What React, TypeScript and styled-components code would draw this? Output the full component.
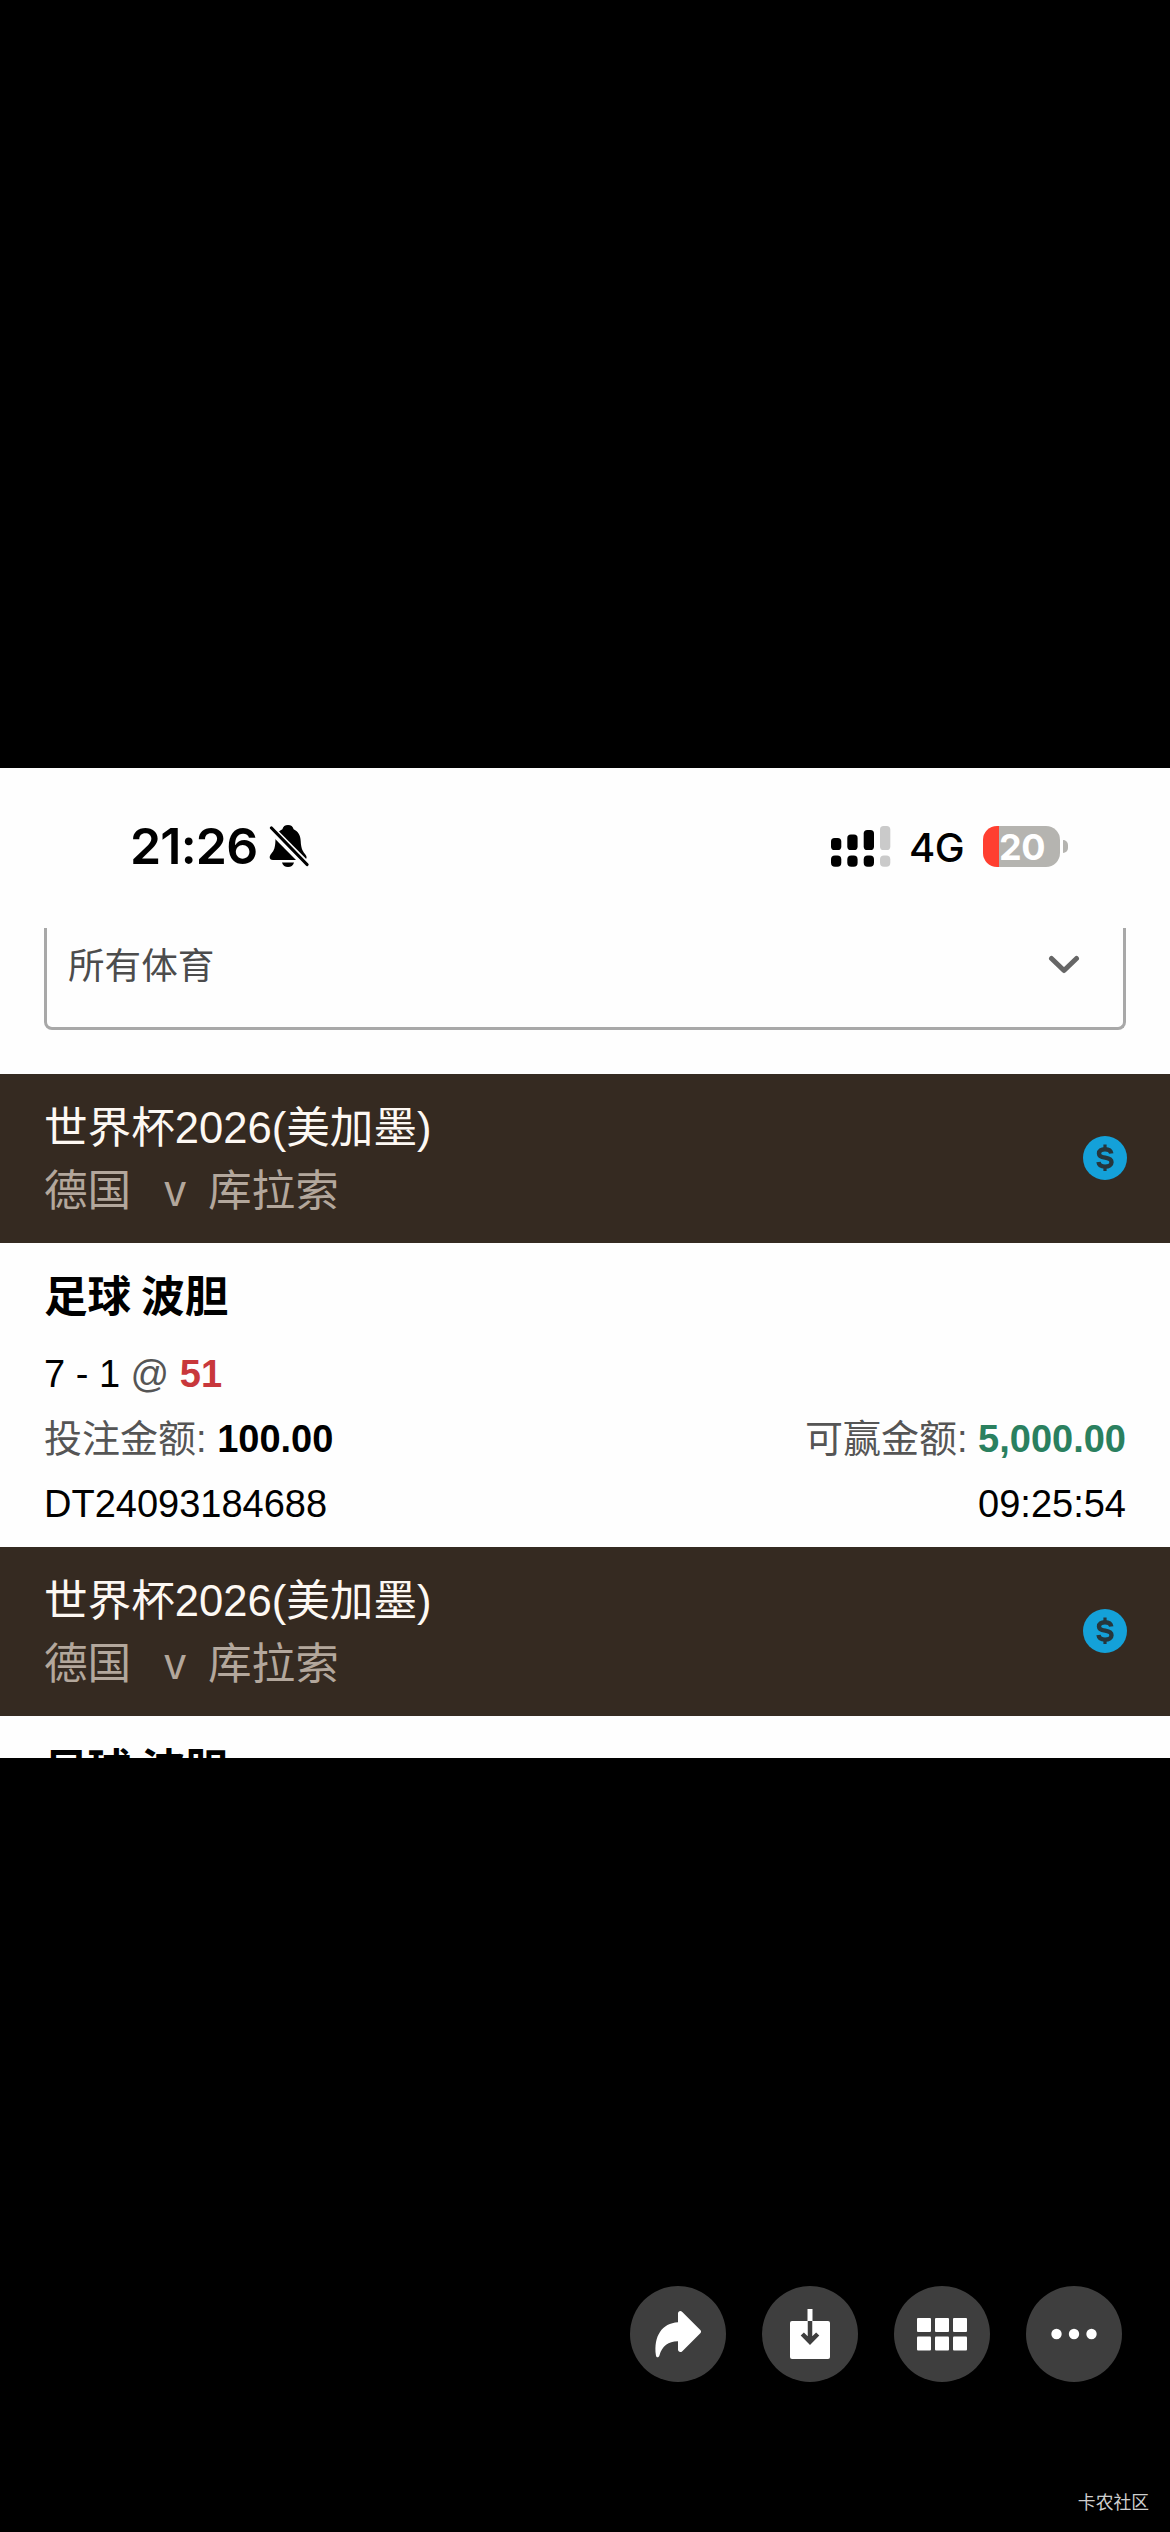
import React from "react";
import styled, { createGlobalStyle } from "styled-components";

const GlobalStyle = createGlobalStyle`
  * { box-sizing: border-box; }
  body { margin: 0; background: #000; }
`;

const Viewer = styled.main`
  display: flex;
  flex-direction: column;
  width: 1170px;
  height: 2532px;
  padding-top: 768px;
  background: #000;
  color: #000;
  font-family: "Liberation Sans", "Noto Sans CJK SC", sans-serif;
`;

const Photo = styled.section`
  flex: none;
  height: 990px;
  overflow: hidden;
  background: #fefefe;
`;

const StatusBar = styled.header`
  display: flex;
  align-items: center;
  height: 160px;
  padding: 0 102px 4px 130px;
  font-family: Inter, sans-serif;
`;

const Clock = styled.span`
  width: 139px;
  font-size: 50px;
  font-weight: 600;
  line-height: 62px;
  letter-spacing: -0.8px;
  white-space: nowrap;
`;

const Indicators = styled.div`
  display: flex;
  align-items: center;
  margin-left: auto;
`;

const Network = styled.span`
  width: 74px;
  margin-left: 18px;
  padding-top: 3px;
  font-size: 40px;
  font-weight: 500;
  line-height: 50px;
  letter-spacing: -0.6px;
`;

const Battery = styled.div`
  display: flex;
  align-items: center;
  gap: 3px;
`;

const BatteryBody = styled.div`
  width: 77px;
  height: 41px;
  border-radius: 14px;
  background: linear-gradient(90deg, #ff3f30 0 16px, #b5b4b0 16px);
  color: #fff;
  font-size: 36px;
  font-weight: 700;
  line-height: 42px;
  letter-spacing: -0.5px;
  padding-left: 16px;
`;

const BatteryCap = styled.div`
  width: 5px;
  height: 13px;
  border-radius: 0 6px 6px 0;
  background: #b5b4b0;
`;

const Select = styled.div`
  display: flex;
  align-items: flex-start;
  justify-content: space-between;
  height: 102px;
  margin: 0 44px 44px;
  padding: 0 43px 0 21px;
  border: solid #a8a8a8;
  border-width: 0 3px 3px;
  border-radius: 0 0 8px 8px;
  color: #4c4c4c;
  font-size: 36.6px;
  line-height: 77px;

  svg { margin-top: 27px; }
`;

const TicketHead = styled.div`
  display: flex;
  align-items: center;
  justify-content: space-between;
  height: 168.5px;
  padding: 0 43px 0 44px;
  background: #352a21;
  font-size: 43.6px;
  line-height: 63px;
`;

const Titles = styled.div`
  display: flex;
  flex-direction: column;
  padding-top: 3px;
`;

const League = styled.div`
  color: #fdf8f3;
`;

const Teams = styled.div`
  display: flex;
  color: #b3a79c;
`;

const Versus = styled.span`
  margin: 0 22px 0 33px;
`;

const TicketBody = styled.div`
  height: 304.5px;
  padding: 18px 44px 0;
  font-size: 38px;
`;

const Market = styled.h2`
  margin: 0 0 17px;
  font-family: "Noto Sans CJK SC", sans-serif;
  font-size: 43.6px;
  font-weight: 700;
  line-height: 64px;
`;

const Row = styled.div`
  display: flex;
  justify-content: space-between;
  height: 65.2px;
  line-height: 65.2px;
  white-space: pre;
`;

const Muted = styled.span`
  color: #555;
`;

const Amount = styled.strong<{ $color?: string }>`
  color: ${(p) => p.$color ?? "#000"};
  font-weight: 700;
`;

const Toolbar = styled.nav`
  display: flex;
  justify-content: flex-end;
  gap: 36px;
  margin-top: 528px;
  padding-right: 48px;
`;

const RoundButton = styled.button`
  width: 96px;
  height: 96px;
  padding: 0;
  border: 0;
  border-radius: 50%;
  background: #3e3e3e;

  svg { display: block; }
`;

const Watermark = styled.div`
  margin-top: 106px;
  padding-right: 21px;
  color: #cfcfcf;
  font-family: "Noto Sans CJK SC", sans-serif;
  font-size: 17.8px;
  line-height: 26px;
  text-align: right;
`;

const MutedBell = () => (
  <svg width="40" height="44" viewBox="0 0 40 44">
    <path d="M19 1c-3 0-5 1.600-5.600 4.200C8.500 7.500 6.600 11.500 6.400 17c-.2 6-1.200 9.500-4 12.500C-.2 32.500 0 36 4 36h30c4 0 4.600-3 2-6-3-3.600-4-7-4.300-13C31.500 11.500 29.400 7.500 24.600 5.200 24 2.600 22 1 19 1z" />
    <path d="M13 38.500h12c-.8 3-3 4.500-6 4.500s-5.200-1.500-6-4.500z" />
    <path d="M1.500 4.500 37.500 41" stroke="#fefefe" strokeWidth="8" />
    <path d="M2.500 4 38 40.500" stroke="#000" strokeWidth="3.200" strokeLinecap="round" />
  </svg>
);

const signalBars = [
  { x: 0, y: 13, color: "#000" },
  { x: 16.3, y: 9.5, color: "#000" },
  { x: 32.7, y: 5, color: "#000" },
  { x: 49, y: 1, color: "#cacaca" },
];

const Signal = () => (
  <svg width="60" height="42" viewBox="0 0 60 42">
    {signalBars.map((b) => (
      <g key={b.x} fill={b.color}>
        <rect x={b.x} y={b.y} width="10.300" height={25 - b.y} rx="3.600" />
        <rect x={b.x} y="30.500" width="10.300" height="11.200" rx="4" />
      </g>
    ))}
  </svg>
);

const Chevron = () => (
  <svg width="32" height="21" viewBox="0 0 32 21">
    <path d="M3.500 3.500 16 15.500 28.500 3.500" fill="none" stroke="#666" strokeWidth="5" strokeLinecap="round" strokeLinejoin="round" />
  </svg>
);

const Coin = () => (
  <svg width="44" height="44" viewBox="0 0 44 44">
    <circle cx="22" cy="22" r="22" fill="#14a1d9" />
    <g fill="none" stroke="#26363c">
      <path d="M28.300 17.500c-.5-3-2.900-4.300-6.300-4.300-3.700 0-6 1.600-6 4.200 0 2.900 2.800 3.700 6.200 4.300 3.500.6 6.300 1.500 6.300 4.500 0 2.800-2.600 4.400-6.400 4.400-3.700 0-6.200-1.500-6.600-4.600" strokeWidth="4.400" />
      <path d="M22 8.500v5M22 30v5" strokeWidth="3.200" />
    </g>
  </svg>
);

const ShareIcon = () => (
  <svg width="96" height="96" viewBox="0 0 96 96" fill="#fff">
    <path d="M48 36.300V27.500c0-2.700 2.700-3.400 4.300-1.600l18 18c1 1 1 2.200 0 3.300l-18 18c-1.700 1.600-4.300.8-4.300-1.600v-8.300c-9-.2-16 4.500-18.500 14-.7 2.700-3.300 2.700-3.600 0C23.500 50 32 37.300 48 36.300z" />
  </svg>
);

const SaveIcon = () => (
  <svg width="96" height="96" viewBox="0 0 96 96">
    <rect x="28" y="35" width="40" height="38" rx="2" fill="#fff" />
    <path d="M48 23v12" stroke="#fff" strokeWidth="5" />
    <path d="M48 35v21M40.300 48 48 55.700 55.700 48" fill="none" stroke="#3e3e3e" strokeWidth="4.500" />
  </svg>
);

const GridIcon = () => (
  <svg width="96" height="96" viewBox="0 0 96 96" fill="#fff">
    {[32, 50.5].map((y) =>
      [23, 41, 59].map((x) => <rect key={`${x}-${y}`} x={x} y={y} width="14" height="14" rx="1" />)
    )}
  </svg>
);

const MoreIcon = () => (
  <svg width="96" height="96" viewBox="0 0 96 96" fill="#fff">
    {[30.5, 48, 65.5].map((x) => <circle key={x} cx={x} cy="48" r="5.200" />)}
  </svg>
);

const Ticket = ({ children }: { children?: React.ReactNode }) => (
  <article>
    <TicketHead>
      <Titles>
        <League>世界杯2026(美加墨)</League>
        <Teams>
          <span>德国</span>
          <Versus>v</Versus>
          <span>库拉索</span>
        </Teams>
      </Titles>
      <Coin />
    </TicketHead>
    <TicketBody>
      <Market>足球 波胆</Market>
      {children}
    </TicketBody>
  </article>
);

export default function App() {
  return (
    <>
      <GlobalStyle />
      <Viewer>
        <Photo>
          <StatusBar>
            <Clock>21:26</Clock>
            <MutedBell />
            <Indicators>
              <Signal />
              <Network>4G</Network>
              <Battery>
                <BatteryBody>20</BatteryBody>
                <BatteryCap />
              </Battery>
            </Indicators>
          </StatusBar>
          <Select>
            <span>所有体育</span>
            <Chevron />
          </Select>
          <Ticket>
            <Row>
              <span>
                7 - 1 <Muted>@</Muted> <Amount $color="#c8373b">51</Amount>
              </span>
            </Row>
            <Row>
              <span>
                <Muted>投注金额:</Muted> <Amount>100.00</Amount>
              </span>
              <span>
                <Muted>可赢金额:</Muted> <Amount $color="#2a805f">5,000.00</Amount>
              </span>
            </Row>
            <Row>
              <span>DT24093184688</span>
              <span>09:25:54</span>
            </Row>
          </Ticket>
          <Ticket />
        </Photo>
        <Toolbar>
          <RoundButton aria-label="分享"><ShareIcon /></RoundButton>
          <RoundButton aria-label="保存"><SaveIcon /></RoundButton>
          <RoundButton aria-label="相册"><GridIcon /></RoundButton>
          <RoundButton aria-label="更多"><MoreIcon /></RoundButton>
        </Toolbar>
        <Watermark>卡农社区</Watermark>
      </Viewer>
    </>
  );
}
